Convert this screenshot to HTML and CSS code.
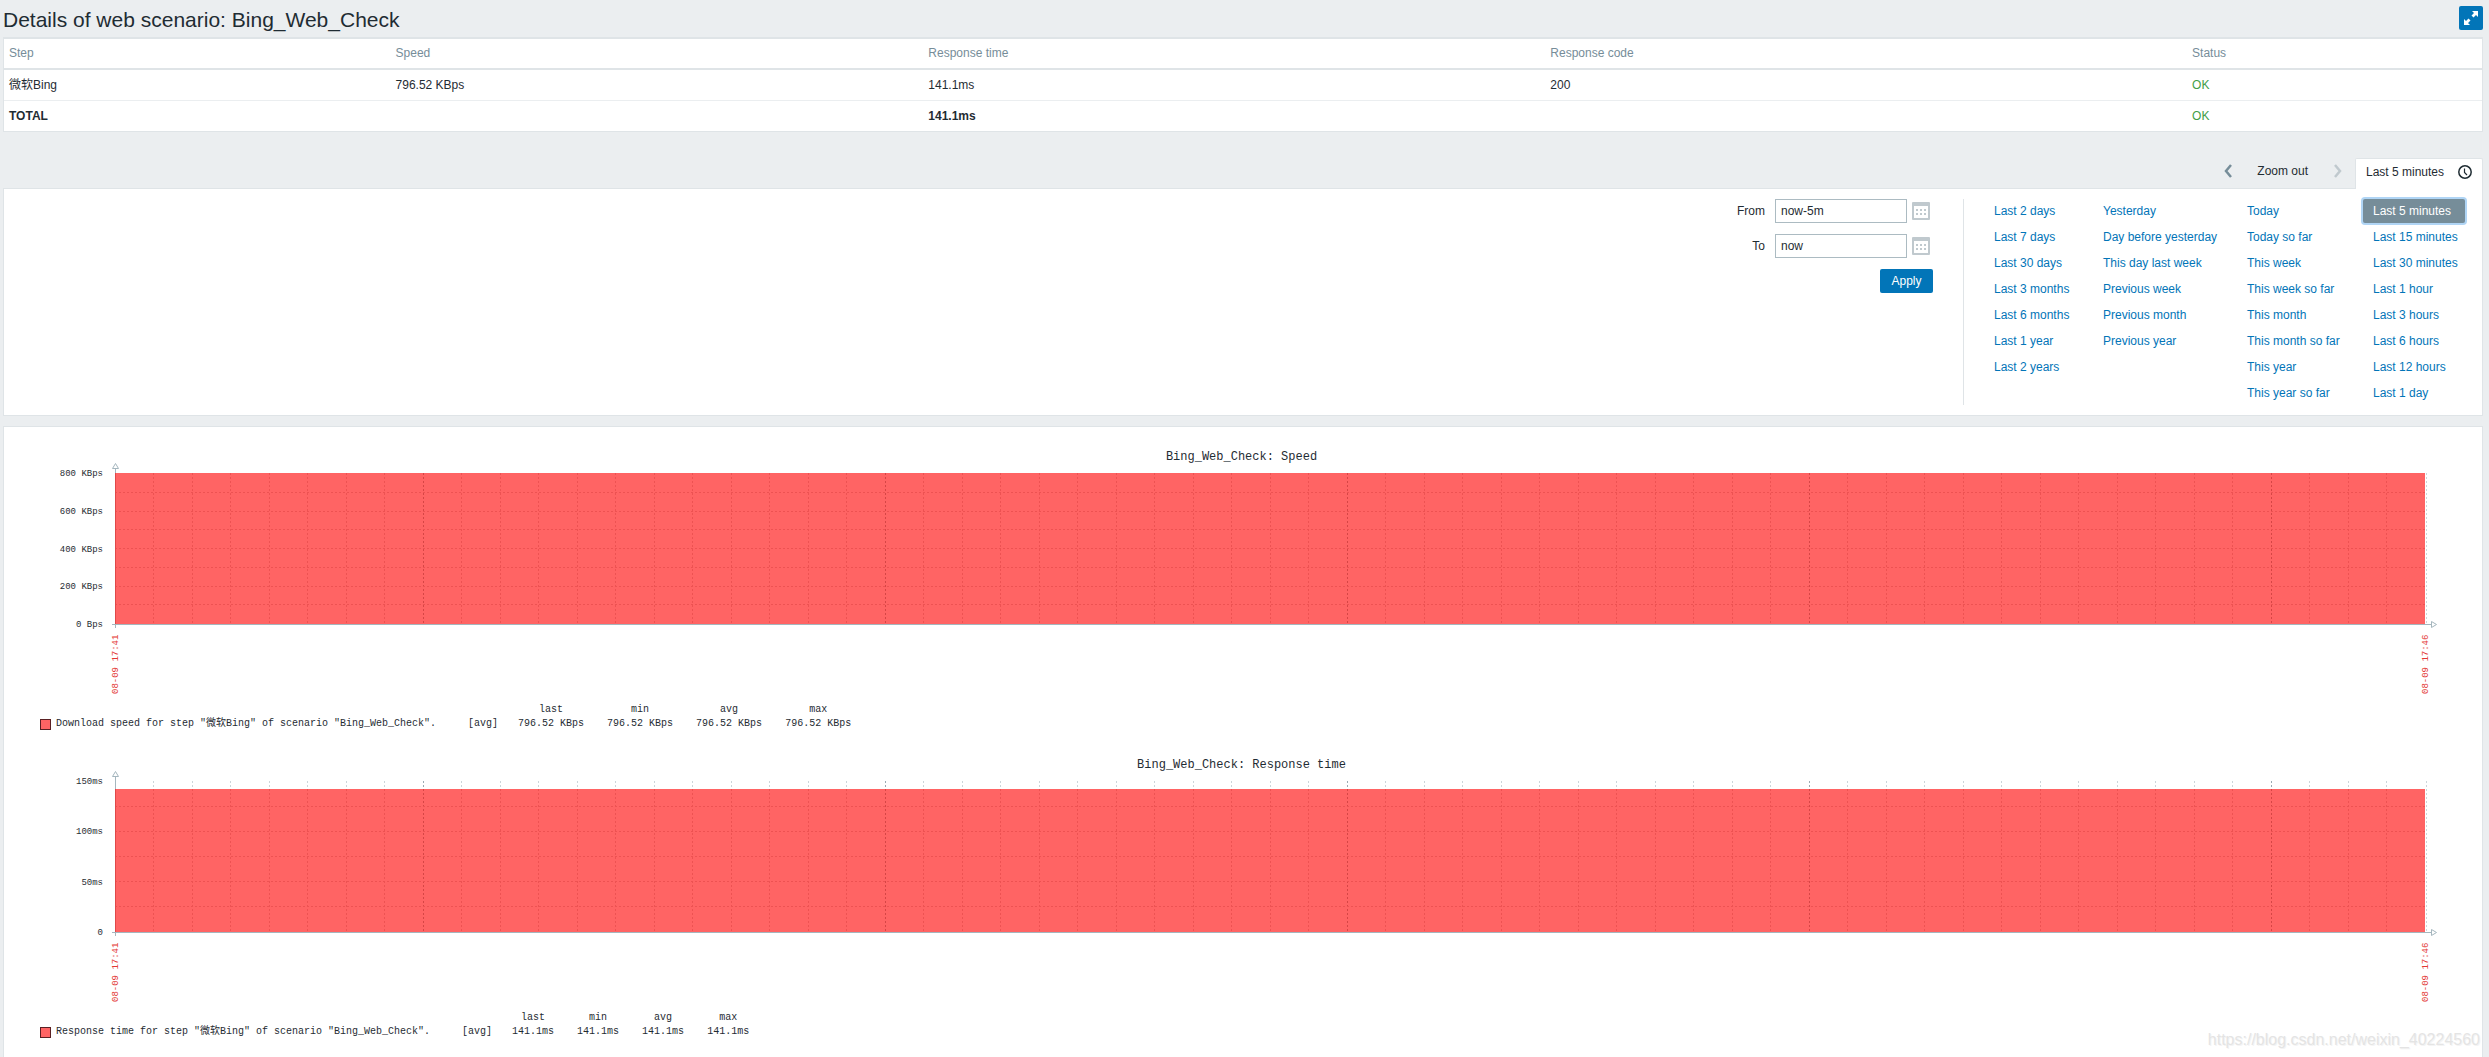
FILE: index.html
```html
<!DOCTYPE html>
<html lang="en">
<head>
<meta charset="utf-8">
<title>Details of web scenario</title>
<link rel="stylesheet" href="styles.css">
</head>
<body>
<header class="page-header">
  <h1>Details of web scenario: Bing_Web_Check</h1>
  <button class="btn-fullscreen" type="button" aria-label="Fullscreen">
    <svg width="24" height="24" viewBox="0 0 24 24" fill="#fff"><path d="M13 5h6v6l-2-2-2.500 2.500-2-2L15 7zM5 13v6h6l-2-2 2.500-2.500-2-2L7 15z"/></svg>
  </button>
</header>

<main>
  <table class="steps">
    <colgroup><col class="c-step"><col class="c-speed"><col class="c-time"><col class="c-code"><col></colgroup>
    <thead><tr><th>Step</th><th>Speed</th><th>Response time</th><th>Response code</th><th>Status</th></tr></thead>
    <tbody>
      <tr><td>微软Bing</td><td>796.52 KBps</td><td>141.1ms</td><td>200</td><td class="ok">OK</td></tr>
      <tr><td><b>TOTAL</b></td><td></td><td><b>141.1ms</b></td><td></td><td class="ok">OK</td></tr>
    </tbody>
  </table>

  <nav class="time-nav">
    <button class="arrow" type="button" aria-label="Earlier"><svg width="8" height="14" viewBox="0 0 8 14"><path d="M7 1L2 7l5 6" fill="none" stroke="#768d99" stroke-width="2.500"/></svg></button>
    <button class="zoom-out" type="button">Zoom out</button>
    <button class="arrow" type="button" aria-label="Later" disabled><svg width="8" height="14" viewBox="0 0 8 14"><path d="M1 1l5 6-5 6" fill="none" stroke="#c0c9ce" stroke-width="2.500"/></svg></button>
    <a class="tab" href="#range">Last 5 minutes
      <svg width="14" height="14" viewBox="0 0 14 14" fill="none" stroke="#1f2c33" stroke-width="1.500"><circle cx="7" cy="7" r="6.200"/><path d="M6.500 3.500v4l2.500 2.500" stroke-width="1.200"/></svg>
    </a>
  </nav>

  <section class="panel range" id="range">
    <form class="range-form">
      <label for="from">From</label>
      <input id="from" type="text" value="now-5m">
      <button class="calendar" type="button" aria-label="Pick start"><svg width="18" height="18" viewBox="0 0 18 18"><use href="#cal"/></svg></button>
      <label for="to">To</label>
      <input id="to" type="text" value="now">
      <button class="calendar" type="button" aria-label="Pick end"><svg width="18" height="18" viewBox="0 0 18 18"><use href="#cal"/></svg></button>
      <button class="apply" type="button">Apply</button>
    </form>
    <div class="presets">
      <ul>
        <li><a href="#r">Last 2 days</a></li><li><a href="#r">Last 7 days</a></li><li><a href="#r">Last 30 days</a></li><li><a href="#r">Last 3 months</a></li><li><a href="#r">Last 6 months</a></li><li><a href="#r">Last 1 year</a></li><li><a href="#r">Last 2 years</a></li>
      </ul>
      <ul>
        <li><a href="#r">Yesterday</a></li><li><a href="#r">Day before yesterday</a></li><li><a href="#r">This day last week</a></li><li><a href="#r">Previous week</a></li><li><a href="#r">Previous month</a></li><li><a href="#r">Previous year</a></li>
      </ul>
      <ul>
        <li><a href="#r">Today</a></li><li><a href="#r">Today so far</a></li><li><a href="#r">This week</a></li><li><a href="#r">This week so far</a></li><li><a href="#r">This month</a></li><li><a href="#r">This month so far</a></li><li><a href="#r">This year</a></li><li><a href="#r">This year so far</a></li>
      </ul>
      <ul>
        <li><a class="selected" href="#r">Last 5 minutes</a></li><li><a href="#r">Last 15 minutes</a></li><li><a href="#r">Last 30 minutes</a></li><li><a href="#r">Last 1 hour</a></li><li><a href="#r">Last 3 hours</a></li><li><a href="#r">Last 6 hours</a></li><li><a href="#r">Last 12 hours</a></li><li><a href="#r">Last 1 day</a></li>
      </ul>
    </div>
  </section>

  <section class="panel charts">
    <figure class="chart">
      <figcaption>Bing_Web_Check: Speed</figcaption>
      <div class="plot-row">
        <ul class="y-labels"><li>800 KBps</li><li>600 KBps</li><li>400 KBps</li><li>200 KBps</li><li>0 Bps</li></ul>
        <svg class="plot" data-top="0" data-rows="19 38 56 75 94 113 131"></svg>
      </div>
      <div class="x-labels"><span>08-09 17:41</span><span>08-09 17:46</span></div>
      <table class="legend">
        <tr><td class="key" colspan="3"></td><th>last</th><th>min</th><th>avg</th><th>max</th></tr>
        <tr><td class="key"><i class="swatch"></i></td><td class="name">Download speed for step "微软Bing" of scenario "Bing_Web_Check".</td><td class="fn">[avg]</td><td>796.52 KBps</td><td>796.52 KBps</td><td>796.52 KBps</td><td>796.52 KBps</td></tr>
      </table>
    </figure>
    <figure class="chart">
      <figcaption>Bing_Web_Check: Response time</figcaption>
      <div class="plot-row">
        <ul class="y-labels"><li>150ms</li><li>100ms</li><li>50ms</li><li>0</li></ul>
        <svg class="plot" data-top="8" data-rows="25 50 75 100 125"></svg>
      </div>
      <div class="x-labels"><span>08-09 17:41</span><span>08-09 17:46</span></div>
      <table class="legend">
        <tr><td class="key" colspan="3"></td><th>last</th><th>min</th><th>avg</th><th>max</th></tr>
        <tr><td class="key"><i class="swatch"></i></td><td class="name">Response time for step "微软Bing" of scenario "Bing_Web_Check".</td><td class="fn">[avg]</td><td>141.1ms</td><td>141.1ms</td><td>141.1ms</td><td>141.1ms</td></tr>
      </table>
    </figure>
  </section>
</main>
<p class="watermark">https://blog.csdn.net/weixin_40224560</p>

<svg class="defs" width="0" height="0"><defs>
  <g id="cal"><path fill="#c0c9ce" fill-rule="evenodd" d="M1 0h16a1 1 0 0 1 1 1v16a1 1 0 0 1-1 1H1a1 1 0 0 1-1-1V1a1 1 0 0 1 1-1zM2 4v12h14V4z"/><path fill="#c0c9ce" d="M4 7h2v2H4zm4 0h2v2H8zm4 0h2v2h-2zM4 11h2v2H4zm4 0h2v2H8zm4 0h2v2h-2z"/></g>
</defs></svg>
<script src="chart.js"></script>
</body>
</html>
```
FILE: styles.css
```css
* { box-sizing: border-box; }
body {
  margin: 0;
  padding: 0 6px 0 3px;
  min-height: 100vh;
  display: flex;
  flex-direction: column;
  position: relative;
  background: #ebeef0;
  color: #1f2c33;
  font: 12px/14px "Liberation Sans", "Noto Sans CJK SC", sans-serif;
}
main { flex: 1; display: flex; flex-direction: column; }
ul { list-style: none; margin: 0; padding: 0; }
button { font: inherit; color: inherit; border: 0; padding: 0; background: none; }
a { color: #0275b8; text-decoration: none; }
svg { display: block; flex: none; }
.defs { position: absolute; }

.page-header { display: flex; justify-content: space-between; height: 37px; padding-top: 6px; }
h1 { margin: 0; font-size: 21px; line-height: 28px; font-weight: 400; }
.btn-fullscreen { width: 24px; height: 24px; background: #0275b8; border-radius: 2px; }

.steps {
  width: 100%;
  table-layout: fixed;
  border-collapse: separate;
  border-spacing: 0;
  background: #fff;
  border: 1px solid #dfe4e7;
  border-top-width: 2px;
}
.c-step { width: 15.6%; }
.c-speed { width: 21.5%; }
.c-time { width: 25.1%; }
.c-code { width: 25.9%; }
.steps th, .steps td { height: 31px; padding: 0 5px; text-align: left; border-bottom: 1px solid #ebeef0; }
.steps th { font-weight: 400; color: #768d99; padding-bottom: 2px; border-bottom: 2px solid #dfe4e7; }
.steps tbody tr:last-child td { height: 30px; border-bottom: 0; }
.steps .ok { color: #429e47; }

.time-nav { display: flex; justify-content: flex-end; height: 30px; margin-top: 26px; }
.arrow, .zoom-out { height: 26px; }
.arrow { width: 8px; }
.zoom-out { margin: 0 26px 0 25px; }
.tab {
  display: flex;
  align-items: center;
  justify-content: space-between;
  width: 128px;
  height: 31px;
  margin-left: 13px;
  padding: 0 10px 4px;
  background: #fff;
  color: #1f2c33;
  border: 1px solid #dfe4e7;
  border-bottom: 0;
  border-radius: 2px 2px 0 0;
  position: relative;
}
.panel { background: #fff; border: 1px solid #dfe4e7; }
.range { display: flex; justify-content: flex-end; padding: 10px 10px 10px 0; }
.range-form {
  display: grid;
  grid-template-columns: 40px 132px 18px;
  grid-template-rows: 24px 24px 24px;
  column-gap: 5px;
  row-gap: 11px;
  align-content: start;
  align-items: center;
  padding-right: 33px;
  border-right: 1px solid #dfe4e7;
}
.range-form label { text-align: right; padding-right: 5px; }
.range-form input {
  width: 100%;
  height: 24px;
  padding: 0 5px;
  border: 1px solid #acbbc2;
  background: #fff;
  font: inherit;
  color: inherit;
}
.apply {
  grid-column: 1 / -1;
  justify-self: end;
  align-self: start;
  width: 53px;
  height: 24px;
  margin-right: -3px;
  background: #0275b8;
  color: #fff;
  border-radius: 2px;
}
.presets { display: grid; grid-template-columns: 109px 144px 126px 109px; padding-left: 20px; }
.presets ul { display: flex; flex-direction: column; align-items: flex-start; gap: 2px; }
.presets a { display: block; height: 24px; padding: 0 10px; line-height: 24px; white-space: nowrap; }
.presets .selected { width: 102px; background: #768d99; color: #fff; border-radius: 2px; box-shadow: 0 0 0 2px #b0d5f5; }

.charts { flex: 1; margin-top: 10px; border-bottom: 0; font-family: "Liberation Mono", "Noto Sans CJK SC", monospace; }
.chart { margin: 0; padding: 22px 57px 4px 36px; }
figcaption { font-size: 12px; line-height: 16px; text-align: center; padding-left: 18px; }
.plot-row { display: flex; margin-top: 8px; }
.y-labels {
  display: flex;
  flex-direction: column;
  justify-content: space-between;
  width: 75px;
  margin: -5px 0 -6px;
  padding-right: 12px;
  text-align: right;
  font-size: 9px;
  line-height: 12px;
}
.plot { flex: 1; min-width: 0; height: 152px; overflow: visible; shape-rendering: crispEdges; }
.plot line { stroke-width: 1; }
.plot svg { overflow: visible; }
.outside { stroke: #ccd5d9; stroke-dasharray: 2 2; }
.outside.major { stroke: #9aaab2; }
.inside { stroke: #ed5252; stroke-dasharray: 2 2; }
.inside.major { stroke: #d64545; }
.area { fill: #ff6464; }
.edge { stroke: #e04848; }
.axis { stroke: #a5b6be; }
.head { fill: #fff; stroke: #a5b6be; shape-rendering: auto; }
.x-labels {
  display: flex;
  justify-content: space-between;
  margin: 9px -7px 0 70px;
  height: 60px;
  font-size: 9px;
  line-height: 12px;
  color: #e33734;
}
.x-labels span { writing-mode: vertical-rl; transform: rotate(180deg); white-space: nowrap; }
.legend { margin-top: 9px; border-collapse: collapse; font-size: 10px; line-height: 14px; white-space: nowrap; }
.legend td, .legend th { height: 14px; padding: 0 23px 0 0; font-weight: 400; text-align: center; }
.legend .key { width: 16px; padding: 0; }
.legend .name { padding-right: 32px; text-align: left; }
.legend .fn { padding-right: 20px; }
.swatch { display: block; width: 11px; height: 11px; background: #ff6464; border: 1px solid #5a2023; }

.watermark {
  position: absolute;
  right: 9px;
  bottom: 7px;
  margin: 0;
  font-size: 16px;
  line-height: 20px;
  color: #e4e4e4;
  text-shadow: 1px 1px 0 #f4f4f4;
}
```
FILE: chart.js
```js
// Draws each plot: 60 five-second columns, with a stronger line on every full minute.
const COLUMNS = 60;
const BASE = 151;
document.querySelectorAll('.plot').forEach((plot) => {
  const top = Number(plot.dataset.top);
  const line = (cls, x1, y1, x2, y2) =>
    `<line class="${cls}" x1="${x1}" y1="${y1}" x2="${x2}" y2="${y2}"/>`;
  let out = `<rect class="area" x="0" y="${top}" width="100%" height="${BASE - top}"/>`;
  for (let i = 1; i < COLUMNS; i++) {
    const x = `${(i * 100) / COLUMNS}%`;
    const major = i % 12 === 8 ? ' major' : '';
    if (top) out += line('outside' + major, x, 0, x, top);
    out += line('inside' + major, x, top, x, BASE);
  }
  plot.dataset.rows.split(' ').forEach((row) => {
    const y = Number(row) + 0.5;
    out += line('inside', 0, y, '100%', y);
  });
  out += `<svg x="100%"><path class="outside" d="M1.5 0V${BASE}"/>` +
    `<path class="axis" d="M0 ${BASE + 0.5}h6"/>` +
    `<path class="head" d="M6.5 ${BASE - 2.5}v6l5-3z"/></svg>`;
  out += line('axis', -3, BASE + 0.5, '100%', BASE + 0.5);
  out += line('axis', 0.5, -5, 0.5, BASE + 4);
  out += line('edge', 0.5, top, 0.5, BASE);
  out += '<path class="head" d="M-2.500 -4.500h6l-3 -5z"/>';
  plot.innerHTML = out;
});
```
